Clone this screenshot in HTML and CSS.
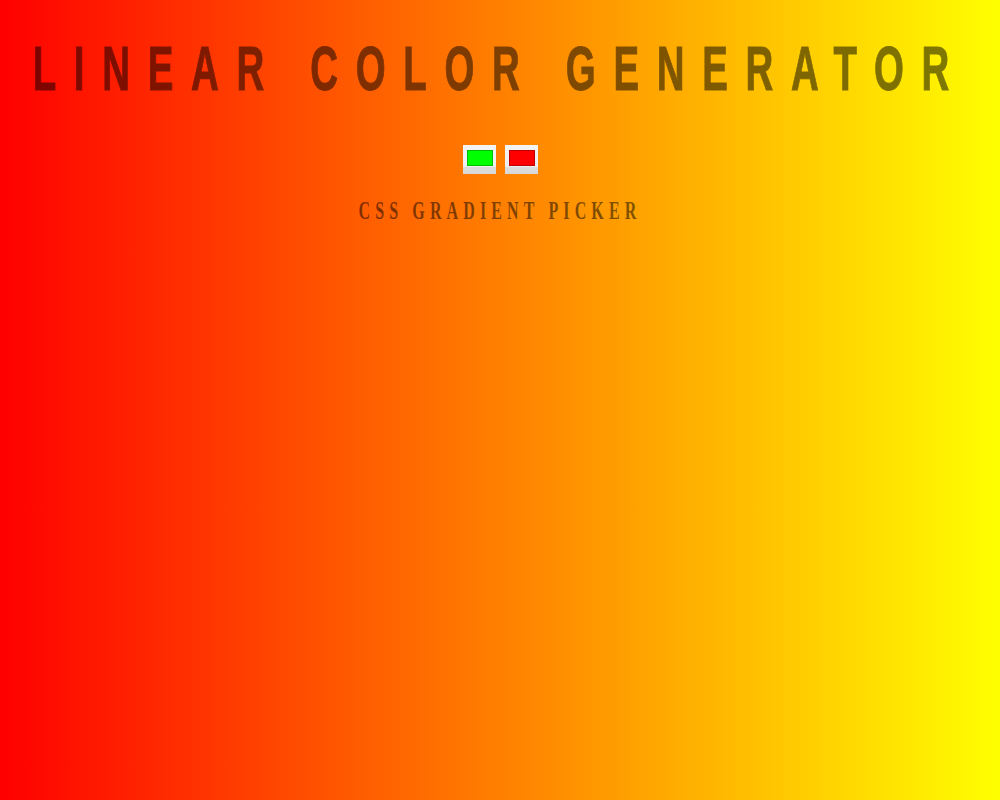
FILE: index.html
```html
<!DOCTYPE html>
<html>
<head>
<meta charset="utf-8">
<link rel="stylesheet" href="styles.css">
</head>
<body>
<div class="page">
  <h1 class="title">LINEAR COLOR GENERATOR</h1>
  <div class="pickers">
    <input class="picker" type="color" value="#00ff00">
    <input class="picker" type="color" value="#ff0000">
  </div>
  <h3 class="subtitle">CSS GRADIENT PICKER</h3>
</div>
</body>
</html>
```
FILE: styles.css
```css
html, body {
  margin: 0;
  height: 100%;
  overflow: hidden;
}
body {
  background: linear-gradient(to right, #ff0000, #ffff00);
}
.page {
  display: flex;
  flex-direction: column;
  align-items: center;
  padding-top: 37px;
}
.title {
  margin: 0;
  font-family: "Liberation Sans", Arial, sans-serif;
  font-weight: bold;
  font-size: 63px;
  line-height: 63px;
  letter-spacing: 29px;
  white-space: nowrap;
  color: #000;
  -webkit-text-stroke: 1px #000;
  opacity: 0.5;
  transform: scaleX(0.61);
}
.pickers {
  display: flex;
  gap: 9px;
  margin-top: 45px;
}
.picker {
  -webkit-appearance: none;
  appearance: none;
  box-sizing: border-box;
  width: 33px;
  height: 29px;
  margin: 0;
  padding: 5px 3px 8px 4px;
  border: none;
  border-radius: 0;
  background: linear-gradient(#f4f4f4 0, #eeeeee 76%, #dcdcdc 76%, #d8d8d8 100%);
  cursor: pointer;
}
.picker::-webkit-color-swatch-wrapper {
  padding: 0;
}
.picker::-webkit-color-swatch {
  border: 1px solid rgba(0, 0, 0, 0.25);
  border-radius: 0;
}
.subtitle {
  margin: 24px 0 0;
  font-family: "Liberation Serif", "Times New Roman", serif;
  font-weight: bold;
  font-size: 25px;
  line-height: 25px;
  letter-spacing: 8px;
  white-space: nowrap;
  color: rgba(0, 0, 0, 0.5);
  transform: scaleX(0.64);
}
```
